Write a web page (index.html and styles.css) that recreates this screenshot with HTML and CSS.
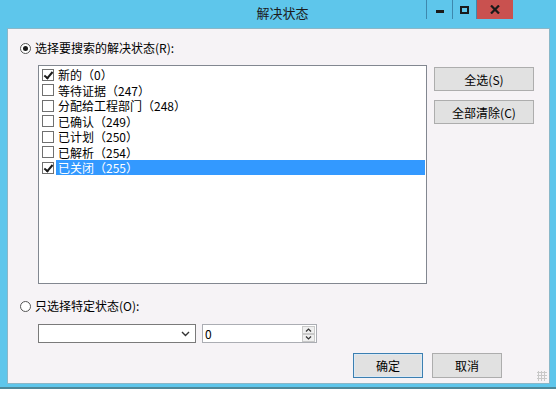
FILE: index.html
```
<!DOCTYPE html>
<html lang="zh-CN">
  <head>
    <meta charset="UTF-8" />
    <meta name="viewport" content="width=device-width, initial-scale=1.0" />
    <title>解决状态</title>
    <link rel="stylesheet" href="styles.css">
  </head>

  <body>
    <div class="window">
      <div class="window__titlebar">
        <span class="window__title">解决状态</span>
        <div class="window__controls">
          <span class="ctl ctl--min"><i></i></span>
          <span class="ctl ctl--max"><i></i></span>
          <span class="ctl ctl--close">
            <svg width="10" height="9" viewBox="0 0 10 9"><path d="M1 0.5 L9 8.5 M9 0.5 L1 8.5" stroke="#1a1a1a" stroke-width="2.2" /></svg>
          </span>
        </div>
      </div>

      <div class="window__client">
        <label class="radio-row">
          <span class="radio checked"></span>
          <span>选择要搜索的解决状态(R):</span>
        </label>

        <div class="pick">
          <div class="list">
            <div class="list__item"><span class="check on"></span><span class="list__text">新的（0）</span></div>
            <div class="list__item"><span class="check"></span><span class="list__text">等待证据（247）</span></div>
            <div class="list__item"><span class="check"></span><span class="list__text">分配给工程部门（248）</span></div>
            <div class="list__item"><span class="check"></span><span class="list__text">已确认（249）</span></div>
            <div class="list__item"><span class="check"></span><span class="list__text">已计划（250）</span></div>
            <div class="list__item"><span class="check"></span><span class="list__text">已解析（254）</span></div>
            <div class="list__item selected"><span class="check on"></span><span class="list__text">已关闭（255）</span></div>
          </div>
          <div class="pick__buttons">
            <button class="btn btn--wide">全选(S)</button>
            <button class="btn btn--wide">全部清除(C)</button>
          </div>
        </div>

        <label class="radio-row radio-row--second">
          <span class="radio"></span>
          <span>只选择特定状态(O):</span>
        </label>

        <div class="specific">
          <div class="combo">
            <svg width="9" height="6" viewBox="0 0 9 6"><path d="M1 1 L4.5 4.5 L8 1" fill="none" stroke="#333" stroke-width="1.4" /></svg>
          </div>
          <div class="spin">
            <span class="spin__value">0</span>
            <span class="spin__arrows">
              <span class="spin__btn"><svg width="7" height="4" viewBox="0 0 7 4"><path d="M1 3.5 L3.5 1 L6 3.5" fill="none" stroke="#333" stroke-width="1.2" /></svg></span>
              <span class="spin__btn"><svg width="7" height="4" viewBox="0 0 7 4"><path d="M1 0.5 L3.5 3 L6 0.5" fill="none" stroke="#333" stroke-width="1.2" /></svg></span>
            </span>
          </div>
        </div>

        <div class="footer">
          <button class="btn btn--ok">确定</button>
          <button class="btn">取消</button>
        </div>
        <span class="grip"></span>
      </div>
    </div>
  </body>
</html>
```

FILE: styles.css
```
body {
  margin: 0;
  background: #ffffff;
  font-family: "Noto Sans CJK SC", "Noto Sans", sans-serif;
  font-size: 12px;
  color: #000;
}

.window {
  width: 556px;
  height: 389px;
  box-sizing: border-box;
  background: #5ec6eb;
  padding: 0 6px 3px 7px;
  border-bottom: 2px solid #4f8899;
  display: flex;
  flex-direction: column;
}

.window__titlebar {
  position: relative;
  height: 28px;
  flex: none;
}
.window__title {
  display: block;
  text-align: center;
  padding-top: 3px;
  padding-left: 8px;
  font-size: 13px;
  color: #1c1c1c;
}
.window__controls {
  position: absolute;
  top: 0;
  right: 37px;
  display: flex;
}
.ctl {
  height: 19px;
  width: 25px;
  border-right: 1px solid #3e88ad;
  display: flex;
  align-items: center;
  justify-content: center;
}
.ctl--min {
  border-left: 1px solid #3e88ad;
}
.ctl--min i {
  width: 8px;
  height: 3px;
  background: #1a1a1a;
  margin-top: 4px;
}
.ctl--max {
  width: 23px;
}
.ctl--max i {
  width: 5px;
  height: 4px;
  border: 2px solid #1a1a1a;
}
.ctl--close {
  width: 36px;
  background: #c9514f;
  border-right: none;
}

.window__client {
  position: relative;
  flex: 1;
  background: #f6f3f6;
  border: 1px solid #8ab7c8;
  padding: 12px 0 0 12px;
}

.radio-row {
  display: flex;
  align-items: center;
  gap: 4px;
  height: 14px;
  line-height: 14px;
}
.radio {
  width: 11px;
  height: 11px;
  border: 1px solid #555;
  border-radius: 50%;
  background: #fff;
  box-sizing: border-box;
  position: relative;
}
.radio.checked::after {
  content: "";
  position: absolute;
  left: 2px;
  top: 2px;
  width: 5px;
  height: 5px;
  border-radius: 50%;
  background: #1a1a1a;
}
.radio-row--second {
  margin-top: 15px;
}

.pick {
  display: flex;
  margin-top: 10px;
  margin-left: 18px;
}
.list {
  width: 389px;
  height: 219px;
  box-sizing: border-box;
  border: 1px solid #828790;
  background: #fff;
  padding-top: 1px;
}
.list__item {
  display: flex;
  align-items: center;
  height: 15.5px;
  padding-left: 3px;
}
.check {
  width: 12px;
  height: 12px;
  box-sizing: border-box;
  border: 1px solid #707070;
  background: #fff;
  margin-right: 2px;
  flex: none;
  position: relative;
}
.check.on::after {
  content: "";
  position: absolute;
  left: 3px;
  top: 0px;
  width: 3px;
  height: 7px;
  border: solid #1a1a1a;
  border-width: 0 2px 2px 0;
  transform: rotate(40deg);
}
.list__text {
  flex: 1;
  height: 15px;
  line-height: 15px;
  padding-left: 2px;
  margin-right: 1px;
}
.list__item.selected .list__text {
  background: #3399ff;
  color: #fff;
}

.pick__buttons {
  display: flex;
  flex-direction: column;
  gap: 9px;
  margin-left: 7px;
  margin-top: 2px;
}

.btn {
  font-family: inherit;
  font-size: 12px;
  height: 25px;
  width: 70px;
  padding: 0;
  background: #e1e1e1;
  border: 1px solid #adadad;
  color: #000;
}
.btn--wide {
  width: 100px;
  height: 24px;
}
.btn--ok {
  border-color: #3c7fb1;
  box-shadow: inset 0 0 0 1px #dbe9f4;
}

.specific {
  display: flex;
  gap: 6px;
  margin-top: 11px;
  margin-left: 18px;
}
.combo {
  width: 158px;
  height: 19px;
  box-sizing: border-box;
  border: 1px solid #7a7a7a;
  background: #fff;
  display: flex;
  align-items: center;
  justify-content: flex-end;
  padding-right: 5px;
}
.spin {
  width: 115px;
  height: 19px;
  box-sizing: border-box;
  border: 1px solid #abadb3;
  background: #fff;
  display: flex;
  align-items: center;
}
.spin__value {
  flex: 1;
  padding-left: 2px;
  line-height: 17px;
}
.spin__arrows {
  display: flex;
  flex-direction: column;
  margin-right: 1px;
}
.spin__btn {
  width: 13px;
  height: 8px;
  box-sizing: border-box;
  border: 1px solid #c9c9c9;
  background: #efefef;
  display: flex;
  align-items: center;
  justify-content: center;
}

.footer {
  display: flex;
  justify-content: flex-end;
  gap: 9px;
  margin-top: 10px;
  padding-right: 47px;
}

.grip {
  position: absolute;
  right: 2px;
  bottom: 2px;
  width: 10px;
  height: 10px;
  background-image: radial-gradient(circle, #c8c8c8 1px, transparent 1.2px);
  background-size: 3px 3px;
}
```
